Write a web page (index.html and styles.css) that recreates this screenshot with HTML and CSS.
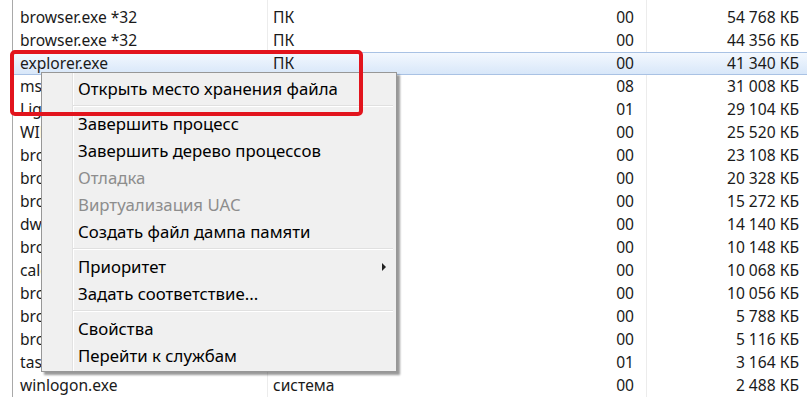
FILE: index.html
```html
<!DOCTYPE html>
<html lang="ru">
<head>
<meta charset="utf-8">
<title>Диспетчер задач</title>
<link rel="stylesheet" href="styles.css">
</head>
<body>
<div class="screen">
  <div class="grid">
    <div class="row"><span class="name">browser.exe *32</span><span class="user">ПК</span><span class="cpu">00</span><span class="mem">71 280 КБ</span></div>
    <div class="row"><span class="name">browser.exe *32</span><span class="user">ПК</span><span class="cpu">00</span><span class="mem">54 768 КБ</span></div>
    <div class="row"><span class="name">browser.exe *32</span><span class="user">ПК</span><span class="cpu">00</span><span class="mem">44 356 КБ</span></div>
    <div class="row selected"><span class="name">explorer.exe</span><span class="user">ПК</span><span class="cpu">00</span><span class="mem">41 340 КБ</span></div>
    <div class="row"><span class="name">msseces.exe</span><span class="user">ПК</span><span class="cpu">08</span><span class="mem">31 008 КБ</span></div>
    <div class="row"><span class="name">LightScribe.exe</span><span class="user">ПК</span><span class="cpu">01</span><span class="mem">29 104 КБ</span></div>
    <div class="row"><span class="name">WINWORD.EXE</span><span class="user">ПК</span><span class="cpu">00</span><span class="mem">25 520 КБ</span></div>
    <div class="row"><span class="name">browser.exe *32</span><span class="user">ПК</span><span class="cpu">00</span><span class="mem">23 108 КБ</span></div>
    <div class="row"><span class="name">browser.exe *32</span><span class="user">ПК</span><span class="cpu">00</span><span class="mem">20 328 КБ</span></div>
    <div class="row"><span class="name">browser.exe *32</span><span class="user">ПК</span><span class="cpu">00</span><span class="mem">15 272 КБ</span></div>
    <div class="row"><span class="name">dwm.exe</span><span class="user">ПК</span><span class="cpu">00</span><span class="mem">14 140 КБ</span></div>
    <div class="row"><span class="name">browser.exe *32</span><span class="user">ПК</span><span class="cpu">00</span><span class="mem">10 148 КБ</span></div>
    <div class="row"><span class="name">calc.exe</span><span class="user">ПК</span><span class="cpu">00</span><span class="mem">10 068 КБ</span></div>
    <div class="row"><span class="name">browser.exe *32</span><span class="user">ПК</span><span class="cpu">00</span><span class="mem">10 056 КБ</span></div>
    <div class="row"><span class="name">browser.exe *32</span><span class="user">ПК</span><span class="cpu">00</span><span class="mem">5 788 КБ</span></div>
    <div class="row"><span class="name">browser.exe *32</span><span class="user">ПК</span><span class="cpu">00</span><span class="mem">5 116 КБ</span></div>
    <div class="row"><span class="name">taskmgr.exe</span><span class="user">ПК</span><span class="cpu">01</span><span class="mem">3 164 КБ</span></div>
    <div class="row"><span class="name">winlogon.exe</span><span class="user">система</span><span class="cpu">00</span><span class="mem">2 488 КБ</span></div>
  </div>

  <div class="menu">
    <div class="item">Открыть место хранения файла</div>
    <div class="sep"></div>
    <div class="item">Завершить процесс</div>
    <div class="item">Завершить дерево процессов</div>
    <div class="item disabled">Отладка</div>
    <div class="item disabled">Виртуализация UAC</div>
    <div class="item">Создать файл дампа памяти</div>
    <div class="sep"></div>
    <div class="item sub">Приоритет<span class="arrow"></span></div>
    <div class="item">Задать соответствие...</div>
    <div class="sep"></div>
    <div class="item">Свойства</div>
    <div class="item">Перейти к службам</div>
  </div>

  <div class="highlight"></div>
</div>
</body>
</html>
```

FILE: styles.css
```css
* { box-sizing: border-box; }

body {
  margin: 0;
  background: #fff;
  font-family: "Noto Sans", "Open Sans", "DejaVu Sans", sans-serif;
  font-size: 15.6px;
  color: #1a1a1a;
}

.screen {
  position: relative;
  width: 807px;
  height: 399px;
  overflow: hidden;
}

.grid {
  margin-left: 12px;
  margin-top: -17px;
  border-left: 1px solid #a9a9a9;
}

.row {
  display: grid;
  grid-template-columns: 255px 300px 79px 1fr;
  height: 23px;
  line-height: 23px;
  white-space: nowrap;
}

.row > span {
  overflow: hidden;
}

.name {
  padding-left: 7px;
  border-right: 1px solid #ececec;
}

.user {
  padding-left: 5px;
}

.cpu {
  text-align: right;
  padding-right: 12px;
  border-right: 1px solid #ececec;
}

.mem {
  text-align: right;
  padding-right: 8px;
}

.row.selected {
  line-height: 21px;
  background: linear-gradient(#f3f8fe, #d8e7f9);
  border-top: 1px solid #a9c2e4;
  border-bottom: 1px solid #a9c2e4;
}

.row.selected .name,
.row.selected .cpu {
  border-right-color: transparent;
}

.menu {
  position: absolute;
  left: 41px;
  top: 72px;
  width: 356px;
  border: 1px solid #979797;
  background-color: #f0f0f0;
  background-image: linear-gradient(to right,
    transparent 30px, #e2e2e2 30px, #e2e2e2 31px,
    #ffffff 31px, #ffffff 32px, transparent 32px);
  padding: 2px;
  box-shadow: 3px 3px 2px rgba(0, 0, 0, 0.4);
  color: #000;
  font-size: 16.8px;
}

.item {
  position: relative;
  height: 27px;
  line-height: 27px;
  padding-left: 34px;
  white-space: nowrap;
}

.item.disabled {
  color: #8d8d8d;
}

.arrow {
  position: absolute;
  right: 8px;
  top: 10px;
  width: 0;
  height: 0;
  border-left: 4px solid #222;
  border-top: 4px solid transparent;
  border-bottom: 4px solid transparent;
}

.sep {
  height: 8px;
  margin-left: 29px;
  margin-right: 1px;
  padding-top: 3px;
}

.sep::before {
  content: "";
  display: block;
  border-top: 1px solid #e0e0e0;
  border-bottom: 1px solid #ffffff;
}

.highlight {
  position: absolute;
  left: 10px;
  top: 50px;
  width: 353px;
  height: 66px;
  border: 4px solid #e2141d;
  border-radius: 5px;
}
```
